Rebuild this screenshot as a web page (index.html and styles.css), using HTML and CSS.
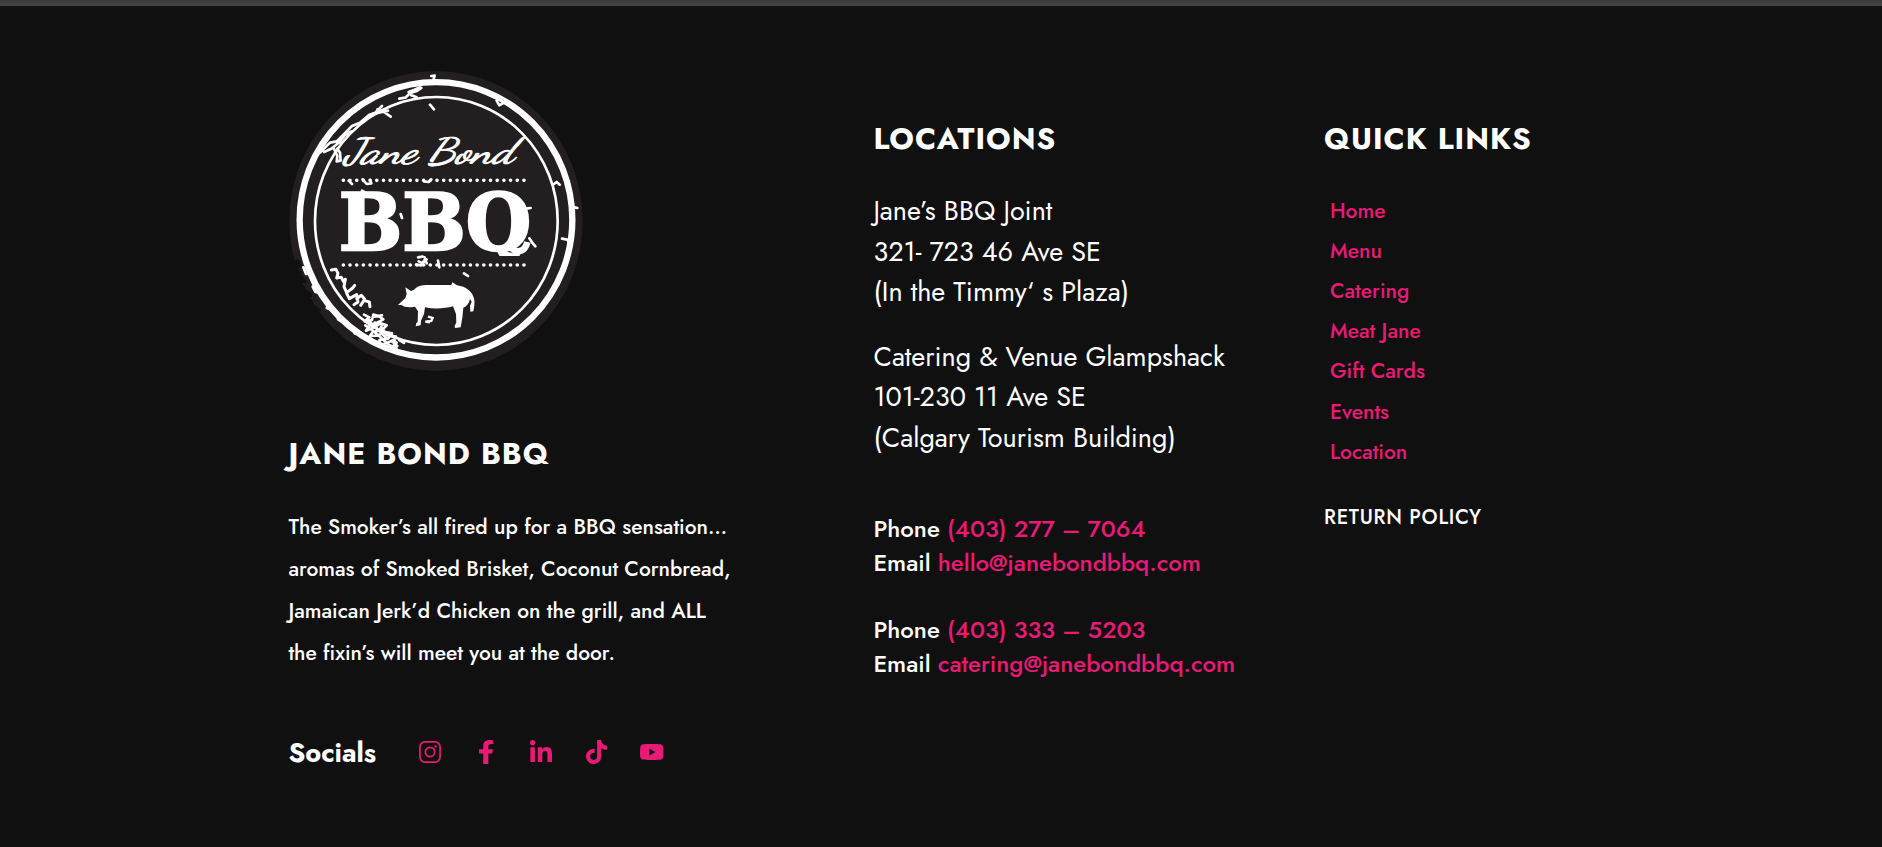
FILE: index.html
```
<!DOCTYPE html>
<html lang="en">
<head>
<meta charset="utf-8">
<title>Jane Bond BBQ</title>
<link rel="stylesheet" href="styles.css">
</head>
<body>
<div class="topbar"></div>
<footer class="footer">
  <section class="about">
    <svg class="logo" viewBox="0 0 930 960" role="img" aria-label="Jane Bond BBQ">
      <clipPath id="baseline"><path d="M170 380H770V588H170z"/></clipPath>
      <ellipse cx="468" cy="483" rx="440" ry="450" fill="#231f20"/>
      <path d="M48 600l12 30-8 12 18 22-4 24 22 18 2 30 24 16 0 30 26 14 16 32 28 12 22 34 32 6 30 32 32 4" fill="none" stroke="#101010" stroke-width="16" stroke-dasharray="26 7 12 9"/>
      <g fill="none" stroke="#fff">
        <ellipse cx="468" cy="479.500" rx="409" ry="413" stroke-width="19"/>
        <ellipse cx="469" cy="483" rx="364" ry="372" stroke-width="8"/>
        <g stroke-width="8" stroke-linejoin="round" stroke-linecap="round">
          <path d="M454 48l10-1-4 14M358 116l18-3 14-13 22-8 12-8M386 96l16-6 18-8M394 106l16 6M450 134l12 14M650 122l8 14 14-8M822 372l8-6 9 8M884 442l8 2M846 536l16 3 4 6M738 446l14-2M748 535l8 12 10 12M552 640l12 8"/>
          <path d="M120 278l30-30 20-4 24-24 22-22 24-10 28-24 18-6 20-20M292 148l20 8 20 14M250 182l36-22 38-8M132 276l22-10 22-18M160 262l12 26-2 16 12-2-2-24-8-12M178 248l16-22 20-12"/>
          <path d="M70 622l8 20 14-4M98 680l8 16 14 2M140 744l10 4M174 778l14 8M224 820l16 4"/>
          <path d="M154 630l14-2 6 12-4 14 14-2 6 12M196 658l-4 22 8 18 18-14 6-8M200 700l8 16 22-12 4 22-12 8M230 716l14-10 10 12-12 18M254 722l14 4 2 14M358 840l14 8" stroke-width="9"/>
          <path d="M252 764l16 8-14 12 22-4 4-16 16 4 14 10-18 10-22 8-12 16 20-8 24-14 18 6-14 14-28 6-8 12 24-2 22-10 20 4-12 16-26 4 4 14 20-6 18-8 10 8-16 16M284 770l22-4M256 796l20 14 24 20 26 24 24 12M310 810l12 16 26 4-10 16 14 12-20 6M270 786l26 24 24 26M284 788l24 4-8 16"/>
          <path d="M206 362l10 10M248 358l12 14 14-2-4-10M432 364l14 2 8-8M246 392l10 6M414 592l14-2M416 604l12 6 12-12M408 614l16 2 8-14M434 592l6 18M474 602l4 20M362 462l4 12"/>
        </g>
      </g>
      <g stroke="#fff" stroke-width="11" stroke-linecap="round" stroke-dasharray="0 20.070">
        <path d="M190 361H735M190 615H735"/>
      </g>
      <text class="logo-script" x="192" y="310" textLength="508" lengthAdjust="spacingAndGlyphs">Jane Bond</text>
      <text class="logo-bbq" x="176" y="570" textLength="578" lengthAdjust="spacingAndGlyphs" clip-path="url(#baseline)">BBQ</text>
      <path d="M690 556c14 26 44 24 52-10" fill="none" stroke="#fff" stroke-width="20"/>
      <path fill="#fff" d="M354 735l22-21 4-12-4-20 17 11 9-4c8-9 18-13 34-14h78l3-8 14 9c28 4 43 18 49 34 6 12 3 30 0 44l-9 1-1-17 5-13-5-8c-3 14-10 22-20 26l-3 30-5 29-17 2-1-6 5-11-1-25-9-23c-25 7-55 9-84 3l-3 20-9 20-1 14-15 3 2-10 4-3 1-32-9-14c-16 3-33 2-40-5z"/>
      <path d="M444 770l14 4-4 9-18 2 14 2" fill="none" stroke="#fff" stroke-width="7"/>
    </svg>
    <h2 class="title name">JANE BOND BBQ</h2>
    <p class="blurb">
      <span class="line">The Smoker’s all fired up for a BBQ sensation…</span>
      <span class="line">aromas of Smoked Brisket, Coconut Cornbread,</span>
      <span class="line">Jamaican Jerk’d Chicken on the grill, and ALL</span>
      <span class="line">the fixin’s will meet you at the door.</span>
    </p>
    <div class="socials">
      <h3 class="socials-label">Socials</h3>
      <div class="icons">
        <svg class="ig" viewBox="0 0 22 22" fill="none" stroke="currentColor"><rect x=".9" y=".9" width="20.200" height="20.200" rx="5" stroke-width="1.700"/><circle cx="11" cy="11" r="4.700" stroke-width="1.700"/><circle cx="16.600" cy="5.400" r="1.200" fill="currentColor" stroke="none"/></svg>
        <svg class="fb" viewBox="22 0 272 512" preserveAspectRatio="none" fill="currentColor"><path d="M279.140 288l14.220-92.660h-88.910v-60.130c0-25.350 12.420-50.060 52.240-50.060h40.420V6.260S260.430 0 225.360 0c-73.220 0-121.080 44.380-121.080 124.720v70.620H22.890V288h81.390v224h100.170V288z"/></svg>
        <svg class="li" viewBox="0 32 448 448" fill="currentColor"><path d="M100.280 480H7.400V180.900h92.880zM53.790 140.100C24.090 140.100 0 115.500 0 85.800a53.790 53.790 0 0 1 107.580 0c0 29.700-24.100 54.300-53.790 54.300zM447.900 480h-92.680V334.400c0-34.700-.7-79.200-48.290-79.200-48.290 0-55.690 37.700-55.690 76.700V480h-92.780V180.900h89.080v40.800h1.300c12.400-23.500 42.690-48.300 87.880-48.300 94 0 111.280 61.900 111.280 142.300V480z"/></svg>
        <svg class="tt" viewBox="0 0 448 512" fill="currentColor"><path d="M448 209.910a210.060 210.060 0 0 1-122.770-39.250v178.720A162.550 162.550 0 1 1 185 188.310v89.890a74.620 74.620 0 1 0 52.230 71.180V0h88a121.180 121.180 0 0 0 1.860 22.170A122.180 122.180 0 0 0 381 102.390a121.430 121.430 0 0 0 67 20.140z"/></svg>
        <svg class="yt" viewBox="14.900 64 546.200 384" preserveAspectRatio="none" fill="currentColor"><path d="M549.655 124.083c-6.281-23.650-24.787-42.276-48.284-48.597C458.781 64 288 64 288 64S117.220 64 74.629 75.486c-23.497 6.322-42.003 24.947-48.284 48.597-11.412 42.867-11.412 132.305-11.412 132.305s0 89.438 11.412 132.305c6.281 23.650 24.787 41.500 48.284 47.821C117.220 448 288 448 288 448s170.780 0 213.371-11.486c23.497-6.321 42.003-24.171 48.284-47.821 11.412-42.867 11.412-132.305 11.412-132.305s0-89.438-11.412-132.305zm-317.510 213.508V175.185l142.739 81.205-142.739 81.201z"/></svg>
      </div>
    </div>
  </section>

  <section class="locations">
    <h2 class="title">LOCATIONS</h2>
    <p class="address">
      <span class="line">Jane’s BBQ Joint</span>
      <span class="line">321- 723 46 Ave SE</span>
      <span class="line">(In the Timmy‘ s Plaza)</span>
    </p>
    <p class="address">
      <span class="line">Catering &amp; Venue Glampshack</span>
      <span class="line">101-230 11 Ave SE</span>
      <span class="line">(Calgary Tourism Building)</span>
    </p>
    <div class="contacts">
      <div>Phone <a>(403) 277 – 7064</a></div>
      <div>Email <a>hello@janebondbbq.com</a></div>
      <div class="second">Phone <a>(403) 333 – 5203</a></div>
      <div>Email <a>catering@janebondbbq.com</a></div>
    </div>
  </section>

  <section class="links">
    <h2 class="title">QUICK LINKS</h2>
    <nav class="menu">
      <a>Home</a>
      <a>Menu</a>
      <a>Catering</a>
      <a>Meat Jane</a>
      <a>Gift Cards</a>
      <a>Events</a>
      <a>Location</a>
    </nav>
    <div class="policy">RETURN POLICY</div>
  </section>
</footer>
</body>
</html>
```
FILE: styles.css
```
* { box-sizing: border-box; margin: 0; padding: 0; }
body {
  height: 847px;
  overflow: hidden;
  background: #101010;
  color: #fff;
  font-family: Jost, Lato, sans-serif;
}
.topbar { height: 6px; background: linear-gradient(#3a3a3a, #464646); }
.footer { display: flex; padding-left: 288.400px; white-space: nowrap; }
.about { width: 585px; padding-top: 54px; }
.locations { width: 450.600px; padding-top: 113px; }
.links { padding-top: 113px; }
.line { display: block; }

.logo { display: block; width: 310px; height: 320px; margin-left: -8.400px; }
.logo-script { font: italic 400 108px "Dancing Script", "Liberation Serif", serif; fill: #fff; stroke: #fff; stroke-width: 2.500px; }
.logo-bbq { font: 700 234px "DejaVu Serif", serif; fill: #fff; stroke: #fff; stroke-width: 7px; }

.title { font-size: 30px; line-height: 40px; font-weight: 700; letter-spacing: 1.030px; }
.name { margin-top: 54px; }

.blurb { margin-top: 32px; font-size: 21px; line-height: 42px; font-weight: 500; }

.socials { display: flex; align-items: flex-start; margin-top: 58px; }
.socials-label { width: 130.600px; padding-top: 1px; font-size: 27px; line-height: 40px; font-weight: 700; }
.icons { display: flex; align-items: center; height: 40px; color: #e91a75; }
.ig { width: 22px; height: 22px; }
.fb { width: 14px; height: 24px; margin-left: 38px; }
.li { width: 22px; height: 22px; margin-left: 37px; margin-top: -2px; }
.tt { width: 21px; height: 24px; margin-left: 34.500px; }
.yt { width: 23.500px; height: 16px; margin-left: 33px; }

.address { margin-top: 32px; font-size: 27px; line-height: 40.500px; }
.address + .address { margin-top: 24px; }

.contacts { margin-top: 54px; font-size: 24px; line-height: 33.600px; font-weight: 500; }
.second { margin-top: 34px; }
.contacts a, .menu { color: #e91a75; }

.menu { display: flex; flex-direction: column; margin-top: 31.600px; padding-left: 6px; font-size: 21px; line-height: 40.200px; font-weight: 500; }
.policy { margin-top: 30.800px; font-size: 20px; line-height: 30px; font-weight: 500; letter-spacing: .75px; }
```
